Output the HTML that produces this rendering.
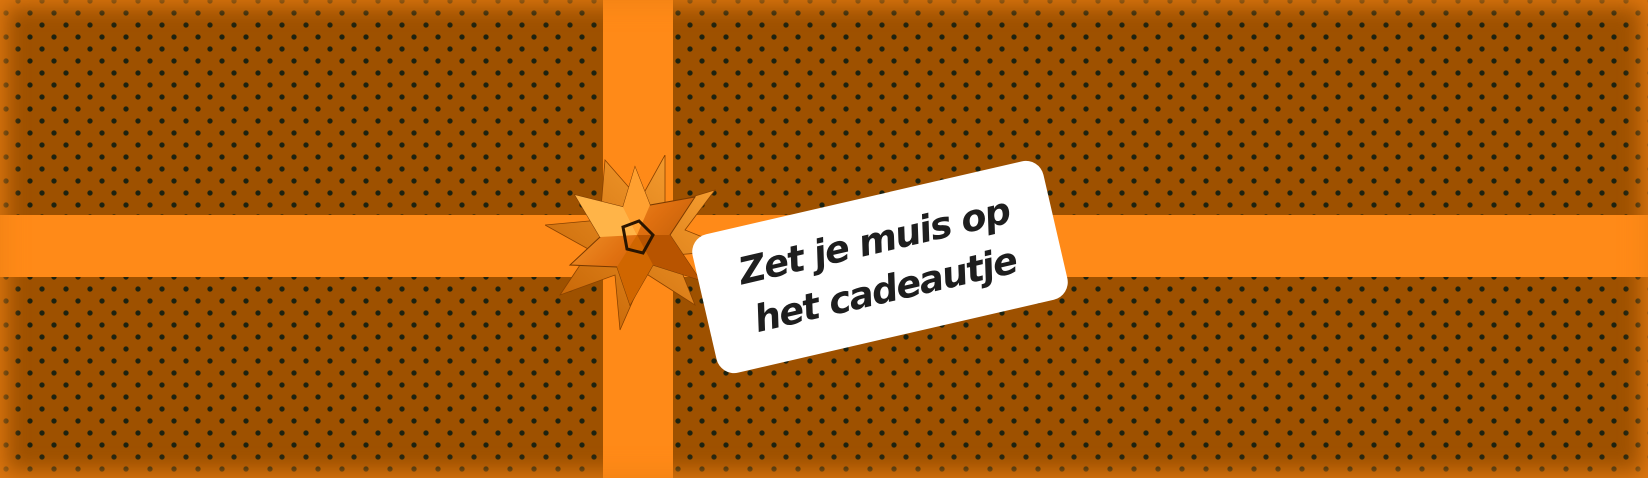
<!DOCTYPE html>
<html><head><meta charset="utf-8"><style>
html,body{margin:0;padding:0}
body{width:1648px;height:478px;overflow:hidden;position:relative;background:#9e5100}
.bg{position:absolute;inset:0;
background-image:radial-gradient(circle,#1c2210 2.2px,transparent 3px),radial-gradient(circle,#1c2210 2.2px,transparent 3px);
background-size:24px 24px,24px 24px;background-position:-6px 1px,6px 13px}
.vig{position:absolute;inset:0;box-shadow:inset 0 0 22px 6px rgba(240,130,20,.8)}
.rv{position:absolute;left:603px;top:0;width:70px;height:478px;background:#ff8a18}
.rh{position:absolute;left:0;top:215px;width:1648px;height:62px;background:#ff8a18}
.tag{position:absolute;left:700px;top:196px;width:360px;height:142px;background:#fff;border-radius:18px;transform:rotate(-13deg);
font-family:"DejaVu Sans",sans-serif;font-weight:bold;font-style:italic;font-size:37px;color:#1e1e1e;text-align:center;line-height:50px;padding-top:20px;box-sizing:border-box;letter-spacing:-1.5px}
</style></head><body>
<div class="bg"></div>
<div class="rv"></div><div class="rh"></div>
<div class="vig"></div>
<svg style="position:absolute;left:545px;top:155px" width="190" height="180" viewBox="0 0 190 180">
<defs><linearGradient id="g" x1="0" y1="0" x2="1" y2="1"><stop offset="0" stop-color="#ffb040"/><stop offset=".5" stop-color="#e07010"/><stop offset="1" stop-color="#a04c00"/></linearGradient>
<linearGradient id="h" x1="1" y1="0" x2="0" y2="1"><stop offset="0" stop-color="#ffa838"/><stop offset="1" stop-color="#c05e00"/></linearGradient></defs>
<polygon fill="url(#h)" stroke="#8a4200" stroke-width=".8" points="60,5 95,45 120,0 120,50 170,35 140,75 190,95 130,100 150,150 100,118 75,175 70,120 15,140 45,95 0,70 55,65"/>
<polygon fill="url(#g)" stroke="#7a3a00" stroke-width="1" points="90,12 105,50 150,42 125,80 155,125 108,110 85,150 72,112 25,110 55,82 30,40 78,52"/>
<polygon fill="#ffa030" points="90,12 105,50 92,80 78,52"/>
<polygon fill="#ffb448" points="30,40 78,52 92,80 55,82"/>
<polygon fill="#b85400" points="92,80 125,80 155,125 108,110"/>
<polygon fill="#d06600" points="92,80 108,110 85,150 72,112"/>
<path d="M78,72 L94,66 L108,80 L98,98 L82,94Z" fill="none" stroke="#2a1500" stroke-width="3"/>
</svg>
<div class="tag">Zet je muis op<br>het cadeautje</div>
</body></html>
